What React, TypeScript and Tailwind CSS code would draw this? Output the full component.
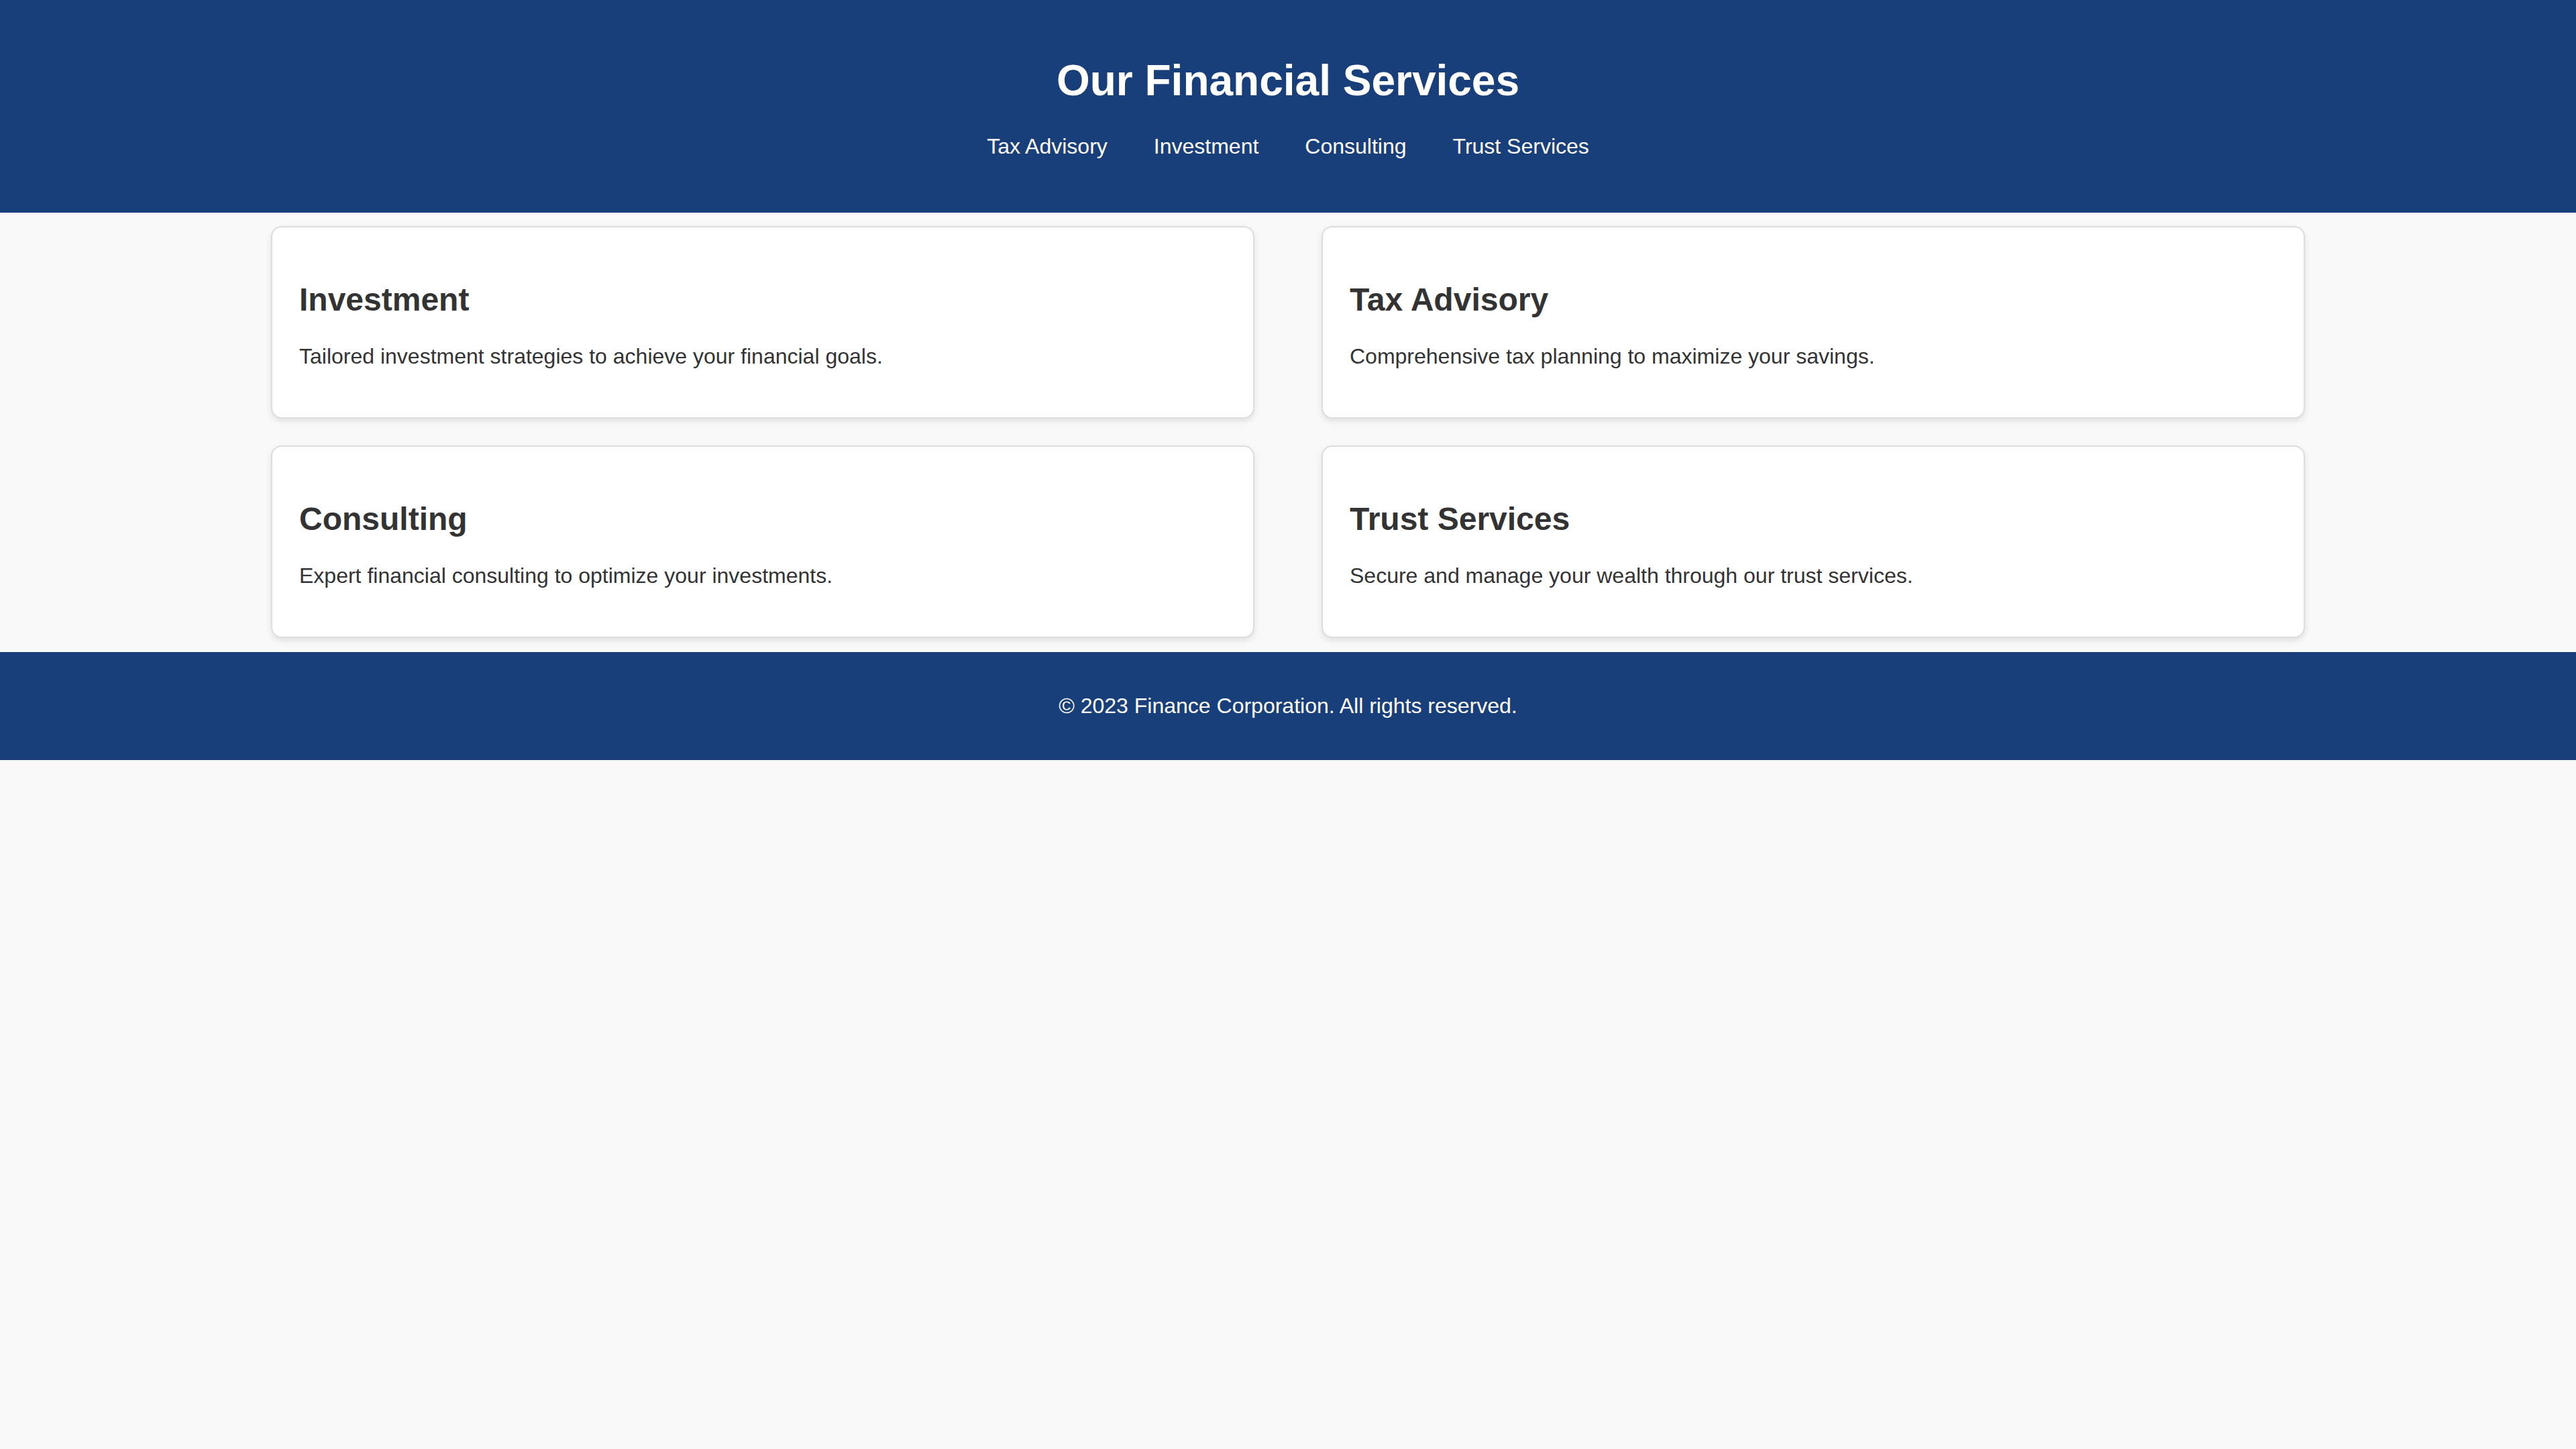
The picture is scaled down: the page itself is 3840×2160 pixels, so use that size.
const links = [
  { label: "Tax Advisory", href: "#tax-advisory" },
  { label: "Investment", href: "#investment" },
  { label: "Consulting", href: "#consulting" },
  { label: "Trust Services", href: "#trust-services" },
];

const services = [
  { id: "investment", title: "Investment", text: "Tailored investment strategies to achieve your financial goals." },
  { id: "tax-advisory", title: "Tax Advisory", text: "Comprehensive tax planning to maximize your savings." },
  { id: "consulting", title: "Consulting", text: "Expert financial consulting to optimize your investments." },
  { id: "trust-services", title: "Trust Services", text: "Secure and manage your wealth through our trust services." },
];

export default function App() {
  return (
    <div className="min-h-screen bg-[#f9f9f9] font-['Liberation_Sans',Arial,sans-serif] text-[32px] leading-[37px] text-[#333333]">
      <header className="bg-[#193f7b] px-10 pt-[83px] pb-20 text-center text-white">
        <h1 className="mb-[43px] text-[64px] leading-[74px] font-bold">Our Financial Services</h1>
        <nav aria-label="Services">
          <ul className="flex flex-wrap justify-center gap-x-[69px]">
            {links.map((link) => (
              <li key={link.href}>
                <a href={link.href}>{link.label}</a>
              </li>
            ))}
          </ul>
        </nav>
      </header>

      <main className="mx-auto grid w-4/5 grid-cols-2 gap-x-[100px] gap-y-10 px-5 pt-5 pb-[21px]">
        {services.map((service) => (
          <section
            key={service.id}
            id={service.id}
            className="rounded-2xl border-2 border-[#dddddd] bg-white px-10 pt-20 pb-[72px] shadow-[0_4px_10px_rgba(0,0,0,0.1)]"
          >
            <h2 className="mb-[39px] text-[48px] leading-[55px] font-bold">{service.title}</h2>
            <p>{service.text}</p>
          </section>
        ))}
      </main>

      <footer className="bg-[#193f7b] px-10 py-[62px] text-center text-white">
        <p>© 2023 Finance Corporation. All rights reserved.</p>
      </footer>
    </div>
  );
}
